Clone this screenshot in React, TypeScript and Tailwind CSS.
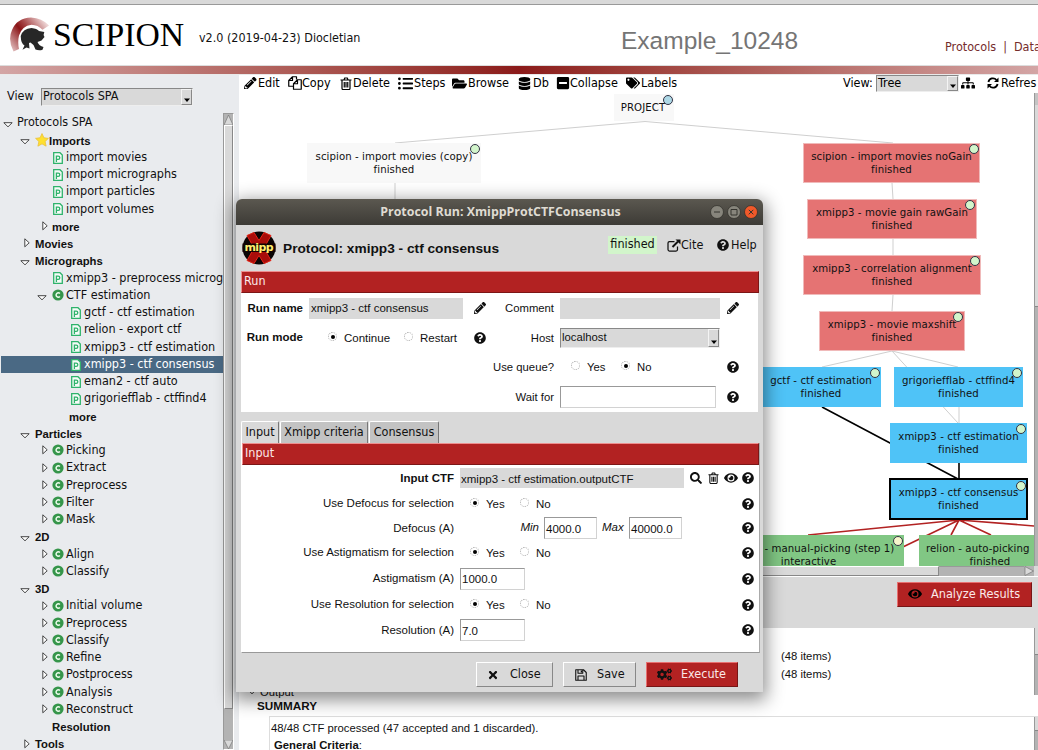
import React from "react";
import { FaCogs, FaDatabase, FaEye, FaFolderOpen, FaListUl, FaMinusSquare, FaPencilAlt, FaQuestionCircle, FaSearch, FaSitemap, FaTags, FaTimes } from "react-icons/fa";

type IconProps = { className?: string };

const CopyIcon = ({ className }: IconProps) => (
  <svg viewBox="0 0 28 28" className={className} fill="none" stroke="currentColor" strokeWidth="2.4" strokeLinejoin="round">
    <path d="M17 7V1.500H9L1.500 9v11.500H11M9 1.500V9H1.500" />
    <path d="M19 7.500h7.500v19H11V15.500ZM19 7.500v8h-8" />
  </svg>
);

const TrashIcon = ({ className }: IconProps) => (
  <svg viewBox="0 0 24 26" className={className} fill="none" stroke="currentColor" strokeWidth="2.400">
    <path d="M1 6h22M8 5.500 9.500 2h5L16 5.500M4 6v16.500Q4 25 6 25h12q2 0 2-2.500V6M8.500 10v11M12 10v11M15.500 10v11" />
  </svg>
);

const LinkIcon = ({ className }: IconProps) => (
  <svg viewBox="0 0 28 26" className={className} fill="none" stroke="currentColor">
    <path d="M15 5H5Q2 5 2 8v13q0 3 3 3h13q3 0 3-3v-6" strokeWidth="2.500" />
    <path d="M11 16 22 5" strokeWidth="4" />
    <path d="M17 1h10v10Z" fill="currentColor" stroke="none" />
  </svg>
);

const SaveIcon = ({ className }: IconProps) => (
  <svg viewBox="0 0 24 24" className={className} fill="none" stroke="currentColor" strokeWidth="2.200" strokeLinejoin="round">
    <path d="M1.500 1.500H17L22.500 7v15.500h-21ZM6 22v-8h12v8M6 2v6.500h9.500V2" />
    <path d="M11.500 3h2.500v4h-2.500z" fill="currentColor" stroke="none" />
  </svg>
);

const RefreshIcon = ({ className }: IconProps) => (
  <svg viewBox="0 0 24 24" className={className} fill="none" stroke="currentColor" strokeWidth="3.600">
    <path d="M2.800 10A9.300 9.300 0 0 1 19 6M21.200 14A9.300 9.300 0 0 1 5 18" />
    <path d="M23 1v9h-9ZM1 23v-9h9Z" fill="currentColor" stroke="none" />
  </svg>
);

const Helmet = () => (
  <svg viewBox="0 -1 40 36" className="h-[36px] w-[40px] shrink-0">
    <defs>
      <linearGradient id="crest" x1="0" y1="1" x2="1" y2="0.300">
        <stop offset="0" stopColor="#ecd2d2" />
        <stop offset="0.480" stopColor="#8a1416" />
        <stop offset="0.650" stopColor="#a8484a" />
        <stop offset="1" stopColor="#ecd2d2" />
      </linearGradient>
    </defs>
    <path d="M4.500 33.500Q-1.500 22 3 12Q8 0 22 -.5Q33 0 40 7.500L33.500 11.800Q29 7 22.500 6.800Q13 8 10 17.500Q8.500 24 10 31Z" fill="url(#crest)" />
    <path d="M11.700 18Q14 10.500 22.500 10Q28 10.500 30 13L35.300 14Q34 16.500 35.500 19L32.500 22.500L28.500 24Q30 28 34.500 29L33.500 31.800Q30 33 26.500 31.500L24.500 27L21.500 24.500L20 25L20.500 30.500L17.500 29.500L13.500 31.800L15.500 27.500Q12 26 11.700 18Z" fill="#272727" />
  </svg>
);

const Star = () => (
  <svg viewBox="0 0 24 24" className="h-[14px] w-[14px] shrink-0">
    <path d="M12 1 15.300 8.300 23 9.200 17.300 14.500 19 22.500 12 18.600 5 22.500 6.700 14.500 1 9.200 8.700 8.300Z" fill="#ffe02f" stroke="#ecc440" strokeWidth="1.500" strokeLinejoin="round" />
  </svg>
);

const ProtIcon = () => (
  <svg viewBox="0 0 10 12" className="mt-px h-[12px] w-[10px] shrink-0">
    <path d="M.7.700h6.300l2.300 2.300v8.300H.7Z" fill="#f6fbf8" stroke="#2fb36b" strokeWidth="1.300" />
    <path d="M3.400 10V4.200H5.200a1.500 1.500 0 0 1 0 3.200H3.400" fill="none" stroke="#2fb36b" strokeWidth="1.300" />
  </svg>
);

const ClassIcon = () => (
  <svg viewBox="0 0 12 12" className="h-[12px] w-[12px] shrink-0">
    <circle cx="6" cy="6" r="5.600" fill="#35954a" />
    <path d="M7.900 4.500A2.200 2.200 0 1 0 7.900 7.500" fill="none" stroke="#eafbea" strokeWidth="1.500" />
  </svg>
);

const OpenArrow = () => (
  <svg viewBox="0 0 10 6" className="mt-[5px] h-[6px] w-[10px] shrink-0"><path d="M.8.700h8.400L5 4.800Z" fill="#fff" stroke="#333" strokeWidth="0.900" /></svg>
);
const ClosedArrow = () => (
  <svg viewBox="0 0 6 10" className="h-[10px] w-[6px] shrink-0"><path d="M.8.800v8L5.200 4.800Z" fill="#fff" stroke="#333" strokeWidth="0.900" /></svg>
);

type Row = { t: string; pad: string; a?: "o" | "c"; gap?: string; i?: "p" | "c" | "s"; b?: boolean; sel?: boolean };
const L3 = "pl-[52px]";
const L4 = "pl-[70px]";
const C3 = "pl-[41px]";
const T1 = "pl-[19px]";
const T1C = "pl-[23px]";
const rows: Row[] = [
  { t: "Protocols SPA", pad: "pl-[2px]", a: "o", gap: "w-[4px]" },
  { t: "Imports", pad: T1, a: "o", gap: "w-[5px]", i: "s", b: true },
  { t: "import movies", pad: L3, i: "p" },
  { t: "import micrographs", pad: L3, i: "p" },
  { t: "import particles", pad: L3, i: "p" },
  { t: "import volumes", pad: L3, i: "p" },
  { t: "more", pad: C3, a: "c", gap: "w-[4px]", b: true },
  { t: "Movies", pad: T1C, a: "c", gap: "w-[5px]", b: true },
  { t: "Micrographs", pad: T1, a: "o", gap: "w-[5px]", b: true },
  { t: "xmipp3 - preprocess microg", pad: L3, i: "p" },
  { t: "CTF estimation", pad: "pl-[36px]", a: "o", gap: "w-[5px]", i: "c" },
  { t: "gctf - ctf estimation", pad: L4, i: "p" },
  { t: "relion - export ctf", pad: L4, i: "p" },
  { t: "xmipp3 - ctf estimation", pad: L4, i: "p" },
  { t: "xmipp3 - ctf consensus", pad: L4, i: "p", sel: true },
  { t: "eman2 - ctf auto", pad: L4, i: "p" },
  { t: "grigoriefflab - ctffind4", pad: L4, i: "p" },
  { t: "more", pad: "pl-[68px]", b: true },
  { t: "Particles", pad: T1, a: "o", gap: "w-[5px]", b: true },
  { t: "Picking", pad: C3, a: "c", gap: "w-[4px]", i: "c" },
  { t: "Extract", pad: C3, a: "c", gap: "w-[4px]", i: "c" },
  { t: "Preprocess", pad: C3, a: "c", gap: "w-[4px]", i: "c" },
  { t: "Filter", pad: C3, a: "c", gap: "w-[4px]", i: "c" },
  { t: "Mask", pad: C3, a: "c", gap: "w-[4px]", i: "c" },
  { t: "2D", pad: T1, a: "o", gap: "w-[5px]", b: true },
  { t: "Align", pad: C3, a: "c", gap: "w-[4px]", i: "c" },
  { t: "Classify", pad: C3, a: "c", gap: "w-[4px]", i: "c" },
  { t: "3D", pad: T1, a: "o", gap: "w-[5px]", b: true },
  { t: "Initial volume", pad: C3, a: "c", gap: "w-[4px]", i: "c" },
  { t: "Preprocess", pad: C3, a: "c", gap: "w-[4px]", i: "c" },
  { t: "Classify", pad: C3, a: "c", gap: "w-[4px]", i: "c" },
  { t: "Refine", pad: C3, a: "c", gap: "w-[4px]", i: "c" },
  { t: "Postprocess", pad: C3, a: "c", gap: "w-[4px]", i: "c" },
  { t: "Analysis", pad: C3, a: "c", gap: "w-[4px]", i: "c" },
  { t: "Reconstruct", pad: C3, a: "c", gap: "w-[4px]", i: "c" },
  { t: "Resolution", pad: "pl-[51px]", b: true },
  { t: "Tools", pad: T1C, a: "c", gap: "w-[5px]", b: true },
];

const TreeRow = ({ r }: { r: Row }) => (
  <div className={`flex h-[17.25px] shrink-0 items-center ${r.sel ? "bg-[#4a6984] text-white" : ""}`}>
    <div className={`flex items-center whitespace-nowrap ${r.pad}`}>
      {r.a === "o" && <OpenArrow />}
      {r.a === "c" && <ClosedArrow />}
      {r.gap && <span className={`shrink-0 ${r.gap}`} />}
      {r.i === "p" && <ProtIcon />}
      {r.i === "c" && <ClassIcon />}
      {r.i === "s" && <Star />}
      <span className={r.b ? "pt-[3px] font-['Liberation_Sans',sans-serif] text-[11.300px] font-bold leading-none" : r.i === "p" ? "pl-[3px] leading-none" : r.i === "c" ? "pl-[2px] leading-none" : "leading-none"}>{r.t}</span>
    </div>
  </div>
);

const Combo = ({ text, className }: { text: string; className: string }) => (
  <div className={`flex items-center justify-between border border-t-[#888] border-l-[#888] border-r-[#eee] border-b-[#eee] bg-[#d9d9d9] pl-[1px] ${className}`}>
    <span className="leading-none">{text}</span>
    <span className="flex h-full w-[11px] items-end justify-center border border-t-[#f4f4f4] border-l-[#f4f4f4] border-r-[#888] border-b-[#888] pb-[2px]">
      <svg viewBox="0 0 6 4" className="h-[4px] w-[6px]"><path d="M0 .5h6L3 4Z" /></svg>
    </span>
  </div>
);

const tools = [
  { t: "Edit", w: "w-[44px]", iw: "w-[14px]", icon: <FaPencilAlt size={12.5} /> },
  { t: "Copy", w: "w-[52px]", iw: "w-[14px]", icon: <CopyIcon className="h-[14px] w-[14px]" /> },
  { t: "Delete", w: "w-[58px]", iw: "w-[13px]", icon: <TrashIcon className="h-[13px] w-[12px]" /> },
  { t: "Steps", w: "w-[54px]", iw: "w-[16px]", icon: <FaListUl size={15} /> },
  { t: "Browse", w: "w-[66px]", iw: "w-[16px]", icon: <FaFolderOpen size={15} /> },
  { t: "Db", w: "w-[38px]", iw: "w-[15px]", icon: <FaDatabase size={13} /> },
  { t: "Collapse", w: "w-[70px]", iw: "w-[14px]", icon: <FaMinusSquare size={14} /> },
  { t: "Labels", w: "w-[60px]", iw: "w-[15px]", icon: <FaTags size={14} /> },
];

type NodeT = { x: number; y: number; w: number; h?: number; name: string; st?: string; c: string; dot: string; dx: number; dy?: number };
const RED = "bg-[#e57373] outline outline-1 outline-[#f0baba] -outline-offset-1";
const BLUE = "bg-[#4fc3f7]";
const GREEN = "bg-[#81c784]";
const WHITE = "bg-[#f8f8f8]";
const DONE = "bg-[#d2f5cb]";
const nodes: NodeT[] = [
  { x: 614, y: 94, w: 60, h: 27, name: "PROJECT", c: WHITE, dot: "bg-[#add8e6]", dx: 667.5, dy: 100 },
  { x: 307, y: 143, w: 174, name: "scipion - import movies (copy)", st: "finished", c: WHITE, dot: DONE, dx: 475 },
  { x: 803, y: 143, w: 177, name: "scipion - import movies noGain", st: "finished", c: RED, dot: DONE, dx: 973.5 },
  { x: 807, y: 199, w: 170, name: "xmipp3 - movie gain rawGain", st: "finished", c: RED, dot: DONE, dx: 970 },
  { x: 803, y: 255, w: 178, name: "xmipp3 - correlation alignment", st: "finished", c: RED, dot: DONE, dx: 974.5 },
  { x: 819, y: 311, w: 146, name: "xmipp3 - movie maxshift", st: "finished", c: RED, dot: DONE, dx: 958 },
  { x: 761, y: 367, w: 120, name: "gctf - ctf estimation", st: "finished", c: BLUE, dot: DONE, dx: 874.5 },
  { x: 894, y: 367, w: 129, name: "grigoriefflab - ctffind4", st: "finished", c: BLUE, dot: DONE, dx: 1017 },
  { x: 890, y: 423, w: 137, name: "xmipp3 - ctf estimation", st: "finished", c: BLUE, dot: DONE, dx: 1021 },
  { x: 889, y: 478, w: 139, h: 42, name: "xmipp3 - ctf consensus", st: "finished", c: "bg-[#4fc3f7] border-2 border-black", dot: DONE, dx: 1021, dy: 485.5 },
  { x: 713, y: 535, w: 191, name: "xmipp3 - manual-picking (step 1)", st: "interactive", c: GREEN, dot: "bg-[#f7f5cb]", dx: 898 },
  { x: 919, y: 535, w: 142, name: "relion - auto-picking", st: "finished", c: GREEN, dot: DONE, dx: 1055 },
];

const Graph = () => (
  <div className="relative h-[473px] w-[795px] overflow-hidden bg-white">
    <svg viewBox="239 93 795 473" className="absolute inset-0 h-full w-full" fill="none">
      <g stroke="#cfcfcf" strokeWidth="1">
        <path d="M645 121.500 395 143M645 121.500 893 143M395 183v20M892 183 893 199M893 239v16M893 295 892 311M892 351 822 367M892 351 958 367M892 351 958 423M959 407v16" />
      </g>
      <path d="M822 407 958 479M959 463v16" stroke="#000" strokeWidth="1.600" />
      <path d="M959 520 808 535M959 520 880 558M959 520 951 535M959 520 991 535M959 520 1060 528" stroke="#b22222" strokeWidth="1.600" />
    </svg>
    {nodes.map((n) => (
      <React.Fragment key={n.name + n.y}>
        <div
          className={`absolute flex flex-col justify-center whitespace-nowrap text-[11.300px] leading-[13px] tracking-[0.080px] ${n.c}`}
          style={{ left: n.x - 239, top: n.y - 93, width: n.w, height: n.h ?? 40 }}
        >
          <span className={n.x === 919 ? "pl-[7px]" : n.st ? "text-center" : "pr-[2px] text-center"}>{n.name}</span>
          {n.st && <span className="text-center">{n.st}</span>}
        </div>
        <div className={`absolute h-[10px] w-[10px] rounded-full border border-[#334] ${n.dot}`} style={{ left: n.dx - 244, top: (n.dy ?? n.y + 6.2) - 98 }} />
      </React.Fragment>
    ))}
  </div>
);

const Help = () => <FaQuestionCircle size={12} className="shrink-0" />;

const Radio = ({ on, label, className }: { on?: boolean; label: string; className?: string }) => (
  <span className={`flex items-center ${className ?? ""}`}>
    <span className="mb-[2px] flex h-[9px] w-[9px] items-center justify-center rounded-full border border-dotted border-[#aaa] bg-white">
      {on && <span className="h-[4px] w-[4px] rounded-full bg-black" />}
    </span>
    <span className="pl-[7px] pt-[2px] leading-none">{label}</span>
  </span>
);

const Bar = ({ text }: { text: string }) => (
  <div className="flex h-[22px] shrink-0 items-center border border-t-[#ee8f8f] border-l-[#ee8f8f] border-r-[#7c1616] border-b-[#7c1616] bg-[#b22222] pb-[2px] pl-[2px] text-[12.500px] leading-none text-[#fbe9e9]">{text}</div>
);

const Field = ({ text, className }: { text: string; className: string }) => (
  <div className={`flex h-[22px] items-center border border-t-[#999] border-l-[#999] border-r-[#d2d2d2] border-b-[#d2d2d2] bg-white pl-px pt-[3px] leading-none ${className}`}>{text}</div>
);

const FormRow = ({ label, h, bold, children }: { label: string; h: string; bold?: boolean; children: React.ReactNode }) => (
  <div className={`flex items-center ${h}`}>
    <span className={`w-[212px] shrink-0 pt-px text-right leading-none ${bold ? "font-bold" : ""}`}>{label}</span>
    <div className="flex flex-1 items-center pl-[6px]">{children}</div>
    <div className="flex w-[17px] shrink-0 justify-start"><Help /></div>
  </div>
);

const YesNo = () => (
  <>
    <Radio on label="Yes" className="ml-[10px] w-[50px]" />
    <Radio label="No" />
  </>
);

const Mipp = () => (
  <svg viewBox="0 0 34 34" className="h-[34px] w-[34px] shrink-0">
    <circle cx="17" cy="17" r="16.500" fill="#0a0505" />
    <path d="M5 4.500 12 1.500 17 9.500 22 1.500 29 4.500 22 17 29 29.500 22 32.500 17 24.500 12 32.500 5 29.500 12 17Z" fill="#a80d0a" stroke="#e52417" strokeWidth="1" />
    <path d="M.5 12.500h33v8.500H.5z" fill="#120303" />
    <text x="17" y="20.200" textAnchor="middle" textLength="29" fill="#ffee70" fontFamily="DejaVu Sans" fontSize="11" fontWeight="bold">mipp</text>
  </svg>
);

const Dialog = () => (
  <div className="absolute left-[236px] top-[199px] flex h-[493px] w-[527px] flex-col overflow-hidden rounded-t-[6px] bg-[#d9d9d9] font-['Liberation_Sans',sans-serif] text-[11.500px]">
    <div className="flex h-[26px] shrink-0 items-center bg-linear-to-b from-[#5b5850] to-[#3d3b36]">
      <span className="w-[474px] pl-[55px] text-center font-['Open_Sans',sans-serif] text-[12.400px] font-bold leading-none text-[#dfdbd2]">Protocol Run: XmippProtCTFConsensus</span>
      <svg viewBox="0 0 48 14" className="h-[14px] w-[48px]" fill="none" stroke="#35342f">
        <circle cx="7" cy="7" r="6.500" fill="#87857c" strokeWidth=".8" /><path d="M4 7h6" />
        <circle cx="24" cy="7" r="6.500" fill="#87857c" strokeWidth=".8" /><path d="M21 4.500h6v5.500h-6z" />
        <circle cx="41" cy="7" r="6.500" fill="#f0592a" strokeWidth=".8" /><path d="M38.800 4.800l4.500 4.500M43.300 4.800l-4.500 4.500" />
      </svg>
    </div>
    <div className="flex h-[46px] shrink-0 items-center pl-[6px]">
      <Mipp />
      <span className="w-[332px] pl-[7px] pt-[2px] text-[13.700px] font-bold leading-none">Protocol: xmipp3 - ctf consensus</span>
      <div className="mb-[6px] flex items-center font-['DejaVu_Sans_Condensed','DejaVu_Sans',sans-serif] text-[12.500px] leading-none">
        <span className="flex h-[18px] w-[49px] items-center justify-center bg-[#d2f5cb] pb-[1px]">finished</span>
        <span className="ml-[10px] flex w-[50px] items-center"><LinkIcon className="h-[13px] w-[14px]" />Cite</span>
        <span className="flex items-center gap-[2px]"><Help />Help</span>
      </div>
    </div>
    <div className="ml-[5px] flex w-[518px] shrink-0 flex-col font-['DejaVu_Sans_Condensed','DejaVu_Sans',sans-serif]"><Bar text="Run" /></div>
    <div className="ml-[5px] flex h-[119px] w-[517px] shrink-0 bg-white">
      <div className="flex w-[250px] flex-col">
        <div className="flex h-[30px] items-center">
          <span className="w-[62px] pt-px text-right font-bold leading-none">Run name</span>
          <span className="ml-[6px] flex h-[21px] w-[154px] items-center bg-[#d9d9d9] pl-[2px] pt-[2px] leading-none">xmipp3 - ctf consensus</span>
          <FaPencilAlt size={12} className="ml-[11px]" />
        </div>
        <div className="flex h-[29px] items-center">
          <span className="w-[62px] text-right font-bold leading-none">Run mode</span>
          <Radio on label="Continue" className="ml-[25px] w-[76px]" />
          <Radio label="Restart" className="w-[70px]" />
          <Help />
        </div>
      </div>
      <div className="flex flex-1 flex-col text-[11.300px]">
        <div className="flex h-[30px] items-center">
          <span className="w-[63px] pt-[2px] text-right leading-none">Comment</span>
          <span className="ml-[6px] h-[21px] w-[160px] bg-[#d9d9d9]" />
          <FaPencilAlt size={12} className="ml-[7px]" />
        </div>
        <div className="flex h-[29px] items-center">
          <span className="w-[63px] pt-[2px] text-right leading-none">Host</span>
          <Combo text="localhost" className="ml-[6px] h-[20px] w-[160px]" />
        </div>
        <div className="flex h-[30px] items-center">
          <span className="w-[63px] pt-px text-right leading-none">Use queue?</span>
          <Radio label="Yes" className="ml-[17px] w-[50px]" />
          <Radio on label="No" className="w-[106px]" />
          <Help />
        </div>
        <div className="flex h-[29px] items-center">
          <span className="w-[63px] pt-[2px] text-right leading-none">Wait for</span>
          <Field text="" className="ml-[6px] w-[156px]" />
          <span className="ml-[11px]"><Help /></span>
        </div>
      </div>
    </div>
    <div className="ml-[5px] mt-[9px] flex h-[22px] shrink-0 items-stretch gap-[1px] font-['DejaVu_Sans_Condensed','DejaVu_Sans',sans-serif] text-[12.500px] leading-none">
      <span className="flex w-[38px] items-center justify-center rounded-t-[2px] border border-b-0 border-t-white border-l-white border-r-[#777]">Input</span>
      <span className="flex w-[88px] items-center justify-center rounded-t-[2px] border border-b-0 border-t-white border-l-white border-r-[#777] bg-[#c3c3c3]">Xmipp criteria</span>
      <span className="flex w-[70px] items-center justify-center rounded-t-[2px] border border-b-0 border-t-white border-l-white border-r-[#777] bg-[#c3c3c3]">Consensus</span>
    </div>
    <div className="ml-[5px] flex h-[210px] w-[519px] shrink-0 flex-col border border-t-0 border-l-white border-r-[#aaa] border-b-[#999] bg-white">
      <div className="flex flex-col font-['DejaVu_Sans_Condensed','DejaVu_Sans',sans-serif]"><Bar text="Input" /></div>
      <FormRow label="Input CTF" h="h-[26px]" bold>
        <span className="flex h-[20px] w-[224px] items-center bg-[#d9d9d9] pl-[1px] pt-[3px] leading-none">xmipp3 - ctf estimation.outputCTF</span>
        <span className="flex items-center pl-[6px]">
          <FaSearch size={12} />
          <TrashIcon className="ml-[6px] h-[12px] w-[11px]" />
          <FaEye size={14} className="ml-[5px]" />
        </span>
      </FormRow>
      <FormRow label="Use Defocus for selection" h="h-[25px]"><YesNo /></FormRow>
      <FormRow label="Defocus (A)" h="h-[24px]">
        <span className="w-[79px] text-right italic leading-none">Min</span>
        <Field text="4000.0" className="ml-[5px] w-[53px]" />
        <span className="ml-[5px] w-[21px] italic leading-none">Max</span>
        <Field text="40000.0" className="ml-[6px] w-[53px]" />
      </FormRow>
      <FormRow label="Use Astigmatism for selection" h="h-[25px]"><YesNo /></FormRow>
      <FormRow label="Astigmatism (A)" h="h-[27px]"><Field text="1000.0" className="w-[65px]" /></FormRow>
      <FormRow label="Use Resolution for selection" h="h-[25px]"><YesNo /></FormRow>
      <FormRow label="Resolution (A)" h="h-[26px]"><Field text="7.0" className="w-[65px]" /></FormRow>
    </div>
    <div className="flex items-center pl-[240px] pt-[9px] font-['DejaVu_Sans_Condensed','DejaVu_Sans',sans-serif] text-[12.500px] leading-none">
      <span className="flex h-[25px] w-[77px] items-center border border-t-white border-l-white border-r-[#888] border-b-[#888] pl-[10px]"><FaTimes size={12} /><span className="pl-[11px]">Close</span></span>
      <span className="ml-[10px] flex h-[25px] w-[73px] items-center border border-t-white border-l-white border-r-[#888] border-b-[#888] pl-[11px]"><SaveIcon className="h-[12px] w-[12px]" /><span className="pl-[10px]">Save</span></span>
      <span className="ml-[10px] flex h-[25px] w-[92px] items-center border border-t-[#e87070] border-l-[#e87070] border-r-[#771515] border-b-[#771515] bg-[#b22222] pl-[10px]"><FaCogs size={15} /><span className="pl-[9px] text-[#fbe9e9]">Execute</span></span>
    </div>
  </div>
);

export default function App() {
  return (
    <div className="relative flex h-[750px] w-[1038px] flex-col overflow-hidden bg-white font-['DejaVu_Sans_Condensed','DejaVu_Sans',sans-serif] text-[12.500px] leading-none text-[#111]">
      <div className="h-[5px] shrink-0 border-b border-[#999] bg-[#d9d9d9]" />
      <header className="flex h-[60px] shrink-0 items-center whitespace-nowrap pl-[9px]">
        <Helmet />
        <span className="w-[146px] shrink-0 pl-[4px] font-['Liberation_Serif',serif] text-[33.700px] text-black">SCIPION</span>
        <span className="w-[422px] shrink-0 pl-[4px] pt-[7px] text-[12.450px]">v2.0 (2019-04-23) Diocletian</span>
        <span className="w-[323px] shrink-0 pl-[4px] pt-[12px] font-['Liberation_Sans',sans-serif] text-[24.500px] text-[#757575]">Example_10248</span>
        <span className="shrink-0 pl-[5px] pt-[24px] text-[#752c2c]">Protocols</span>
        <span className="shrink-0 pl-[7px] pt-[24px] text-[#752c2c]">|</span>
        <span className="shrink-0 pl-[7px] pt-[24px] text-[#752c2c]">Data</span>
      </header>
      <div className="h-[10px] shrink-0 border-y border-t-[#ddd] border-b-[#e9e9e9] bg-linear-to-r from-[#d3a5a5] via-[#8b1a1a] to-[#d3a5a5]" />
      <div className="flex h-[675px] shrink-0">
        <aside className="flex w-[239px] shrink-0 flex-col bg-[#e9ebee]">
          <div className="flex h-[38px] shrink-0 items-center pl-[7px] pt-[5px]">
            <span className="w-[34px]">View</span>
            <Combo text="Protocols SPA" className="h-[18px] w-[152px]" />
          </div>
          <div className="flex h-[637px] overflow-hidden">
            <div className="flex w-[223px] flex-col overflow-hidden pl-px pt-[1px]">
              {rows.map((r, i) => <TreeRow key={i} r={r} />)}
            </div>
            <div className="flex w-[11px] flex-col border border-t-[#999] border-l-[#999] border-r-white border-b-white bg-[#b3b3b3]">
              <svg viewBox="0 0 9 11" className="h-[11px] w-[9px]"><path d="M0 11 4.500 1 9 11Z" fill="#d9d9d9" stroke="#777" strokeWidth=".7" /></svg>
              <div className="h-[584px] border border-t-white border-l-white border-r-[#888] border-b-[#888] bg-[#d9d9d9]" />
              <div className="flex-1" />
              <svg viewBox="0 0 9 9" className="h-[9px] w-[9px]"><path d="M0 0h9L4.500 9Z" fill="#d9d9d9" stroke="#777" strokeWidth=".7" /></svg>
            </div>
          </div>
        </aside>
        <main className="flex w-[799px] flex-col">
          <div className="flex h-[18px] shrink-0 items-center whitespace-nowrap pb-[2px] pl-[5px] text-black">
            {tools.map((t) => (
              <span key={t.t} className={`flex shrink-0 items-center ${t.w}`}>
                <span className={`flex shrink-0 ${t.iw}`}>{t.icon}</span>{t.t}
              </span>
            ))}
            <span className="ml-[157px] w-[33px] shrink-0">View:</span>
            <Combo text="Tree" className="h-[17px] w-[83px] shrink-0" />
            <FaSitemap size={14} className="ml-[2px] shrink-0" />
            <RefreshIcon className="ml-[12px] mr-[2px] h-[12px] w-[12px] shrink-0" />
            <span>Refres</span>
          </div>
          <div className="flex h-[473px] shrink-0">
            <Graph />
            <div className="flex w-[4px] flex-col overflow-hidden border-l border-[#999] bg-[#b3b3b3]">
              <div className="h-[12px] bg-[#c4c4c4]" />
              <div className="h-[202px] border-b border-[#888] bg-[#d9d9d9]" />
            </div>
          </div>
          <div className="flex h-[11px] shrink-0 border-b border-white bg-[#d9d9d9]">
            <div className="w-[700px] border border-t-white border-r-[#888] border-b-[#888] bg-[#d9d9d9]" />
            <div className="w-[85px] border-t border-[#999] bg-[#b3b3b3]" />
            <svg viewBox="0 0 10 10" className="h-[10px] w-[10px] bg-[#b3b3b3]"><path d="M1 .5v9L9.500 5Z" fill="#d9d9d9" stroke="#777" strokeWidth=".7" /></svg>
          </div>
          <div className="flex h-[51px] shrink-0 items-start justify-end bg-[#d9d9d9] pr-[6px] pt-[5px]">
            <span className="flex h-[25px] w-[135px] items-center border border-t-[#e87070] border-l-[#e87070] border-r-[#771515] border-b-[#771515] bg-[#b22222] pb-[1px] pl-[10px] text-[12.600px] text-[#fbe9e9]">
              <FaEye size={14} className="text-black" /><span className="pl-[9px]">Analyze Results</span>
            </span>
          </div>
          <div className="flex h-[67px] shrink-0 justify-between font-['Liberation_Sans',sans-serif] text-[11.300px]">
            <div className="flex flex-1 flex-col justify-end">
              <div className="pl-[542px] pb-[6px]">(48 items)</div>
              <div className="pl-[542px] pb-[4px]">(48 items)</div>
              <div className="flex items-end pl-[8px]"><OpenArrow /><span className="-mb-[3px] pl-[3px]">Output</span></div>
            </div>
            <div className="flex w-[4px] flex-col border-l border-[#999] bg-[#b3b3b3]"><div className="h-[27px] border-b border-[#888] bg-[#d9d9d9]" /></div>
          </div>
          <div className="flex h-[21px] shrink-0 items-center pl-[18px] pt-[1px] font-['Liberation_Sans',sans-serif] text-[11.700px] font-bold">SUMMARY</div>
          <div className="ml-[30px] flex h-[34px] shrink-0 justify-between border-l border-t border-[#ddd] font-['Liberation_Sans',sans-serif] text-[11.300px]">
            <div className="flex flex-col gap-[6px] pt-[6px]">
              <span className="pl-px">48/48 CTF processed (47 accepted and 1 discarded).</span>
              <span className="pl-[4px] font-bold">General Criteria<span className="font-normal">:</span></span>
            </div>
            <div className="w-[4px] border-l border-[#999] bg-[#b3b3b3]"><div className="h-[14px] border-b border-[#888] bg-[#d9d9d9]" /></div>
          </div>
        </main>
      </div>
      <div className="pointer-events-none absolute left-[236px] top-[199px] h-[493px] w-[527px] rounded-t-[6px] shadow-[0_5px_18px_3px_rgba(0,0,0,0.450)]" />
      <Dialog />
    </div>
  );
}
